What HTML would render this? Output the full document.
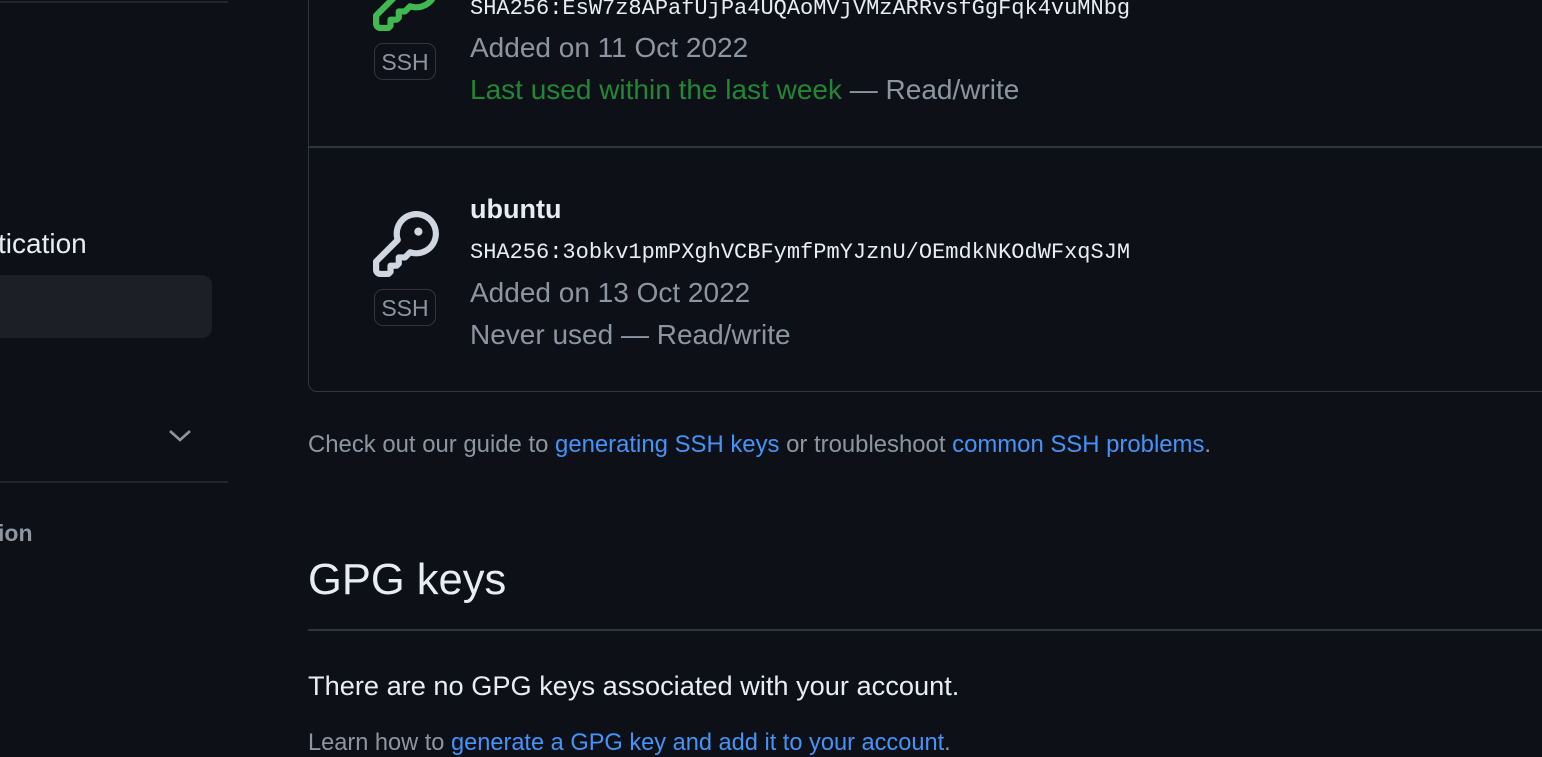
<!DOCTYPE html>
<html><head><meta charset="utf-8"><style>
body{margin:0;width:1542px;height:749px;background:#0d1117;overflow:hidden;font-family:"Liberation Sans",sans-serif;color:#e6edf3;position:relative}
.a{position:absolute;white-space:nowrap}
.m{font-family:"Liberation Mono",monospace;font-size:22px;color:#e6edf3}
.g{color:#8d96a0;font-size:28px}
.b{border:1.5px solid #30363d;border-radius:9px;font-size:23px;color:#8d96a0;width:60px;height:35px;line-height:36px;text-align:center}
a{color:#4493f8;text-decoration:none}
</style></head><body>
<div class="a" style="left:0;top:1px;width:228px;height:2px;background:#21262d"></div>
<div class="a" style="left:-2px;top:228px;font-size:28px;color:#e6edf3">tication</div>
<div class="a" style="left:-20px;top:275px;width:232px;height:63px;background:#1c2026;border-radius:10px"></div>
<svg class="a" style="left:168px;top:428px" width="24" height="16" viewBox="0 0 24 16"><path d="M2 3l10 9 10-9" fill="none" stroke="#8d96a0" stroke-width="2.6"/></svg>
<div class="a" style="left:0;top:481px;width:228px;height:2px;background:#21262d"></div>
<div class="a" style="left:-2px;top:520px;font-size:23px;color:#8d96a0;font-weight:bold">ion</div>

<div class="a" style="left:308px;top:-20px;width:1260px;height:410px;border:1.5px solid #30363d;border-radius:9px"></div>
<div class="a" style="left:309px;top:146px;width:1240px;height:1.5px;background:#30363d"></div>

<svg class="a" style="left:373px;top:-35px" width="66" height="66" viewBox="0 0 16 16"><path fill="#3fb950" d="M10.5 0a5.499 5.499 0 1 1-1.288 10.848l-.932.932a.749.749 0 0 1-.53.22H7v.75a.749.749 0 0 1-.22.53l-.5.5a.749.749 0 0 1-.53.22H5v.75a.749.749 0 0 1-.22.53l-.5.5a.749.749 0 0 1-.53.22h-2A1.75 1.75 0 0 1 0 14.25v-2c0-.199.079-.389.22-.53l4.932-4.932A5.5 5.5 0 0 1 10.5 0Zm-4 5.5c-.001.431.069.86.205 1.269a.75.75 0 0 1-.181.768L1.5 12.56v1.690c0 .138.112.25.25.25h1.69l.06-.06v-1.19a.75.75 0 0 1 .75-.75h1.19l.06-.06v-1.19a.75.75 0 0 1 .75-.75h1.19l1.023-1.025a.75.75 0 0 1 .768-.18A4 4 0 1 0 6.5 5.5ZM11 6a1 1 0 1 1 0-2 1 1 0 0 1 0 2Z"/></svg>
<div class="a b" style="left:374px;top:43px">SSH</div>
<div class="a m" style="left:470px;top:-4px">SHA256:EsW7z8APafUjPa4UQAoMVjVMzARRvsfGgFqk4vuMNbg</div>
<div class="a g" style="left:470px;top:32px">Added on 11 Oct 2022</div>
<div class="a g" style="left:470px;top:74px"><span style="color:#238636">Last used within the last week</span> — Read/write</div>

<svg class="a" style="left:373px;top:211px" width="66" height="66" viewBox="0 0 16 16"><path fill="#d1d7e0" d="M10.5 0a5.499 5.499 0 1 1-1.288 10.848l-.932.932a.749.749 0 0 1-.53.22H7v.75a.749.749 0 0 1-.22.53l-.5.5a.749.749 0 0 1-.53.22H5v.75a.749.749 0 0 1-.22.53l-.5.5a.749.749 0 0 1-.53.22h-2A1.75 1.75 0 0 1 0 14.25v-2c0-.199.079-.389.22-.53l4.932-4.932A5.5 5.5 0 0 1 10.5 0Zm-4 5.5c-.001.431.069.86.205 1.269a.75.75 0 0 1-.181.768L1.5 12.56v1.69c0 .138.112.25.25.25h1.69l.06-.06v-1.19a.75.75 0 0 1 .75-.75h1.19l.06-.06v-1.19a.75.75 0 0 1 .75-.75h1.19l1.023-1.025a.75.75 0 0 1 .768-.18A4 4 0 1 0 6.5 5.5ZM11 6a1 1 0 1 1 0-2 1 1 0 0 1 0 2Z"/></svg>
<div class="a b" style="left:374px;top:289px">SSH</div>
<div class="a" style="left:470px;top:194px;font-size:27px;font-weight:bold;color:#e6edf3">ubuntu</div>
<div class="a m" style="left:470px;top:240px">SHA256:3obkv1pmPXghVCBFymfPmYJznU/OEmdkNKOdWFxqSJM</div>
<div class="a g" style="left:470px;top:277px">Added on 13 Oct 2022</div>
<div class="a g" style="left:470px;top:319px">Never used — Read/write</div>

<div class="a" style="left:308px;top:431px;font-size:23.9px;color:#8d96a0">Check out our guide to <a>generating SSH keys</a> or troubleshoot <a>common SSH problems</a>.</div>
<div class="a" style="left:308px;top:556px;font-size:43.5px;color:#e6edf3">GPG keys</div>
<div class="a" style="left:308px;top:629px;width:1240px;height:1.5px;background:#30363d"></div>
<div class="a" style="left:308px;top:670px;font-size:27.2px;color:#e6edf3">There are no GPG keys associated with your account.</div>
<div class="a" style="left:308px;top:730px;font-size:23.6px;color:#8d96a0">Learn how to <a>generate a GPG key and add it to your account</a>.</div>
</body></html>
